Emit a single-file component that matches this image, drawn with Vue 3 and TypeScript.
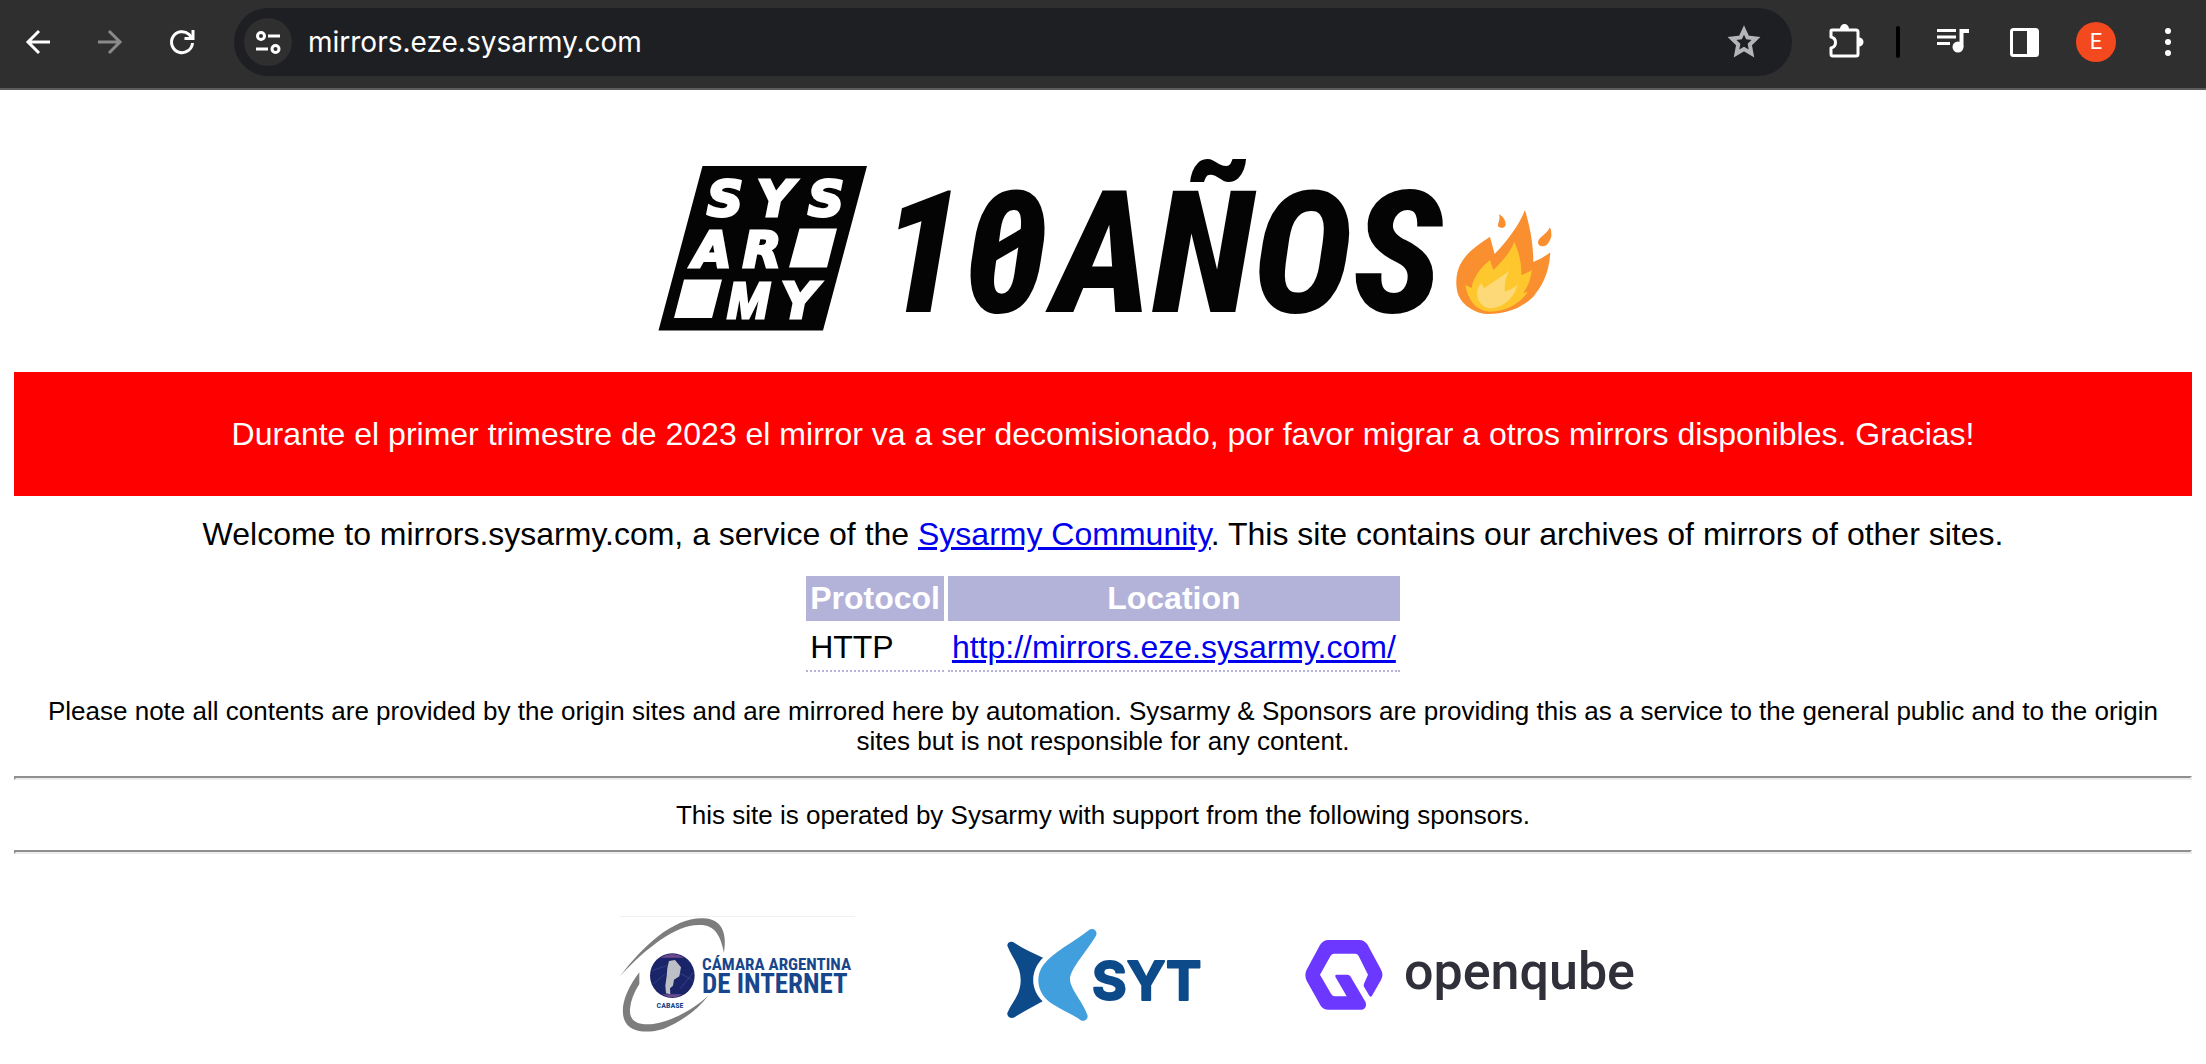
<script setup lang="ts">
import { ref } from 'vue'

interface MirrorLocation {
  protocol: string
  url: string
}

const address = ref<string>('mirrors.eze.sysarmy.com')
const locations: MirrorLocation[] = [
  { protocol: 'HTTP', url: 'http://mirrors.eze.sysarmy.com/' },
]
</script>

<template>
  <div class="window">
    <header class="toolbar">
      <nav class="nav-buttons">
        <button type="button" class="tool" aria-label="Back">
          <svg viewBox="0 0 48 48" fill="none" stroke="#fff" stroke-width="3">
            <path d="M36 24H14M25 13L14 24L25 35" />
          </svg>
        </button>
        <button type="button" class="tool" aria-label="Forward">
          <svg viewBox="0 0 48 48" fill="none" stroke="#8a8a8a" stroke-width="3">
            <path d="M12 24H34M23 13L34 24L23 35" />
          </svg>
        </button>
        <button type="button" class="tool" aria-label="Reload">
          <svg viewBox="0 0 48 48" fill="none" stroke="#fff" stroke-width="3">
            <path d="M34.500 25A10.500 10.500 0 1 1 31 16.300L34 20" />
            <path d="M35 12V20.500H26.500" />
          </svg>
        </button>
      </nav>

      <div class="omnibox">
        <button type="button" class="site-info" aria-label="Site information">
          <svg viewBox="0 0 48 48" fill="none" stroke="#fff" stroke-width="3">
            <circle cx="17" cy="18" r="3.500" />
            <path d="M24 18H36M12 31H24" />
            <circle cx="31.500" cy="31" r="3.500" />
          </svg>
        </button>
        <input v-model="address" class="address" type="text" aria-label="Address" spellcheck="false" />
        <button type="button" class="tool" aria-label="Bookmark this page">
          <svg viewBox="0 0 48 48" fill="none" stroke="#b4b5b8" stroke-width="4">
            <path d="M24 12L27.500 19.500L36 20.500L29.800 26.500L31.500 35.500L24 31L16.500 35.500L18.200 26.500L12 20.500L20.500 19.500Z" />
          </svg>
        </button>
      </div>

      <div class="actions">
        <button type="button" class="tool" aria-label="Extensions">
          <svg viewBox="0 0 48 48">
            <path
              d="M10 12H34Q36 12 36 14V36Q36 38 34 38H11Q9 38 9 36V30Q13.500 29 13.500 24.500T9 19V13Q9 12 10 12Z"
              fill="none"
              stroke="#fff"
              stroke-width="3"
              stroke-linejoin="round"
            />
            <path d="M18 11A4.500 5 0 0 1 27 11ZM37 19.500A4.500 4.500 0 0 1 37 28.500Z" fill="#fff" />
          </svg>
        </button>
        <span class="separator"></span>
        <button type="button" class="tool" aria-label="Media controls">
          <svg viewBox="0 0 48 48" fill="#fff">
            <path d="M9 11H28V14H9ZM9 17.500H28V20.500H9ZM9 24H22V27H9Z" />
            <circle cx="30" cy="29" r="5.500" />
            <path d="M31.500 11H41V15H35.500V29H31.500Z" />
          </svg>
        </button>
        <button type="button" class="tool" aria-label="Side panel">
          <svg viewBox="0 0 48 48">
            <rect x="11.500" y="11.500" width="26" height="26" rx="2" fill="none" stroke="#fff" stroke-width="3" />
            <path d="M27 11H38V38H27Z" fill="#fff" />
          </svg>
        </button>
        <button type="button" class="tool" aria-label="Profile">
          <span class="avatar">E</span>
        </button>
        <button type="button" class="tool" aria-label="Menu">
          <svg viewBox="0 0 48 48" fill="#fff">
            <circle cx="24" cy="13" r="3" />
            <circle cx="24" cy="24" r="3" />
            <circle cx="24" cy="35" r="3" />
          </svg>
        </button>
      </div>
    </header>

    <main class="page">
      <h1 class="banner">
        <svg class="banner-art" viewBox="643 90 920 282" role="img" aria-label="Sysarmy 10 años">
          <path d="M702.500 166H867L823 330.500H658.500Z" fill="#040404" />
          <g class="mark-letters">
            <text x="725" y="216">S</text>
            <text x="775" y="216">Y</text>
            <text x="826" y="216">S</text>
            <text x="712" y="267">A</text>
            <text x="762" y="267">R</text>
            <text x="748" y="318" class="wide-letter">M</text>
            <text x="799" y="318">Y</text>
          </g>
          <path d="M799.500 228.500H837L827 267.500H789ZM684 279.500H722L712 318H674Z" fill="#fff" />
          <g class="title">
            <text x="880" y="312">10</text>
            <text x="1053" y="312">AÑOS</text>
          </g>
          <path d="M978 254L1026 226V243L978 271Z" fill="#040404" />
          <g transform="translate(1200 140) scale(0.3333)">
            <path
              d="M975 210C990 260 1000 310 1000 366C1018 358 1035 350 1051 337C1048 400 1025 440 1000 470C965 505 920 522 865 522C830 522 790 500 775 465C765 435 768 400 780 375C800 335 840 310 870 290L884 342C920 305 955 260 975 210Z"
              fill="#f98f2f"
            />
            <path
              d="M897 223C912 230 918 245 917 255C914 266 898 266 894 257C893 248 902 240 897 223ZM1050 262C1058 280 1055 300 1040 315C1028 323 1014 318 1014 307C1016 290 1040 285 1050 262Z"
              fill="#f98f2f"
            />
            <path
              d="M943 306C958 340 965 370 964 405C975 402 985 397 996 390C992 415 985 440 970 458L983 457C960 490 920 515 870 515C830 512 805 485 796 435L815 444C820 410 845 380 870 360L880 390C905 365 930 340 943 306Z"
              fill="#fec72e"
            />
            <path
              d="M928 392C915 415 913 435 915 455C928 450 940 445 952 436C945 465 920 500 875 505C845 505 830 480 831 455C832 445 838 435 845 430L852 445C880 425 905 410 928 392Z"
              fill="#fdd977"
            />
          </g>
        </svg>
      </h1>

      <p class="notice">
        Durante el primer trimestre de 2023 el mirror va a ser decomisionado, por favor migrar a otros mirrors
        disponibles. Gracias!
      </p>

      <p class="welcome">
        Welcome to mirrors.sysarmy.com, a service of the <a href="#">Sysarmy Community</a>. This site contains our
        archives of mirrors of other sites.
      </p>

      <table class="locations">
        <thead>
          <tr>
            <th scope="col">Protocol</th>
            <th scope="col">Location</th>
          </tr>
        </thead>
        <tbody>
          <tr v-for="row in locations" :key="row.url">
            <td>{{ row.protocol }}</td>
            <td><a :href="row.url">{{ row.url }}</a></td>
          </tr>
        </tbody>
      </table>

      <p class="small">
        Please note all contents are provided by the origin sites and are mirrored here by automation. Sysarmy &amp;
        Sponsors are providing this as a service to the general public and to the origin sites but is not responsible
        for any content.
      </p>
      <hr />
      <p class="small">This site is operated by Sysarmy with support from the following sponsors.</p>
      <hr />

      <section class="sponsors" aria-label="Sponsors">
        <svg width="334" height="150" viewBox="566 890 334 150" role="img" aria-label="Cámara Argentina de Internet">
          <path d="M620 917.500H855" stroke="#f1f1f1" stroke-width="1" />
          <g transform="translate(600 890) scale(0.3333)">
            <path
              d="M60 262C130 170 220 85 310 88C365 90 382 130 372 192C362 140 345 108 300 108C230 105 140 175 60 262Z"
              fill="#7d7d7d"
            />
            <path
              d="M118 250C80 300 60 350 72 390C85 430 140 435 190 420C240 400 290 365 325 320C280 360 220 395 160 405C110 410 88 395 90 360C92 335 102 310 118 285Z"
              fill="#7d7d7d"
            />
            <circle cx="217" cy="260" r="67" fill="#1a2468" />
            <path d="M180 206Q217 184 254 206ZM186 316Q217 334 248 316Z" fill="#6c4a8c" />
            <path d="M155 245L200 230L280 275M240 300L280 250M160 285L195 255" stroke="#3c4a94" stroke-width="2" fill="none" />
            <path
              d="M207 216L225 213L243 235L238 262L222 272L219 290L210 298L211 316L198 313L196 290L200 262L202 238Z"
              fill="#bcc0c6"
            />
          </g>
          <text class="camara-top" x="702" y="971">CÁMARA ARGENTINA</text>
          <text class="camara-bottom" x="702" y="994">DE INTERNET</text>
          <text class="cabase" x="670" y="1009">CABASE</text>
        </svg>

        <svg width="240" height="150" viewBox="980 890 240 150" role="img" aria-label="SYT">
          <g transform="translate(980 900) scale(0.3333)">
            <path
              d="M82 140C82 128 95 125 104 132C130 150 160 162 189 176C150 215 150 270 188 307C160 322 130 338 105 354C92 362 80 352 82 342C95 310 122 290 122 243C122 200 95 175 82 140Z"
              fill="#0d4a8a"
            />
            <path
              d="M326 94C338 84 355 96 348 110C325 150 270 210 270 240C270 270 310 310 323 350C324 364 310 370 300 362C270 340 210 320 190 290C170 262 170 225 190 198C220 160 280 130 326 94Z"
              fill="#419fde"
            />
          </g>
          <text class="syt" x="1092" y="1001">SYT</text>
        </svg>

        <svg width="340" height="150" viewBox="1300 890 340 150" role="img" aria-label="openqube">
          <g transform="translate(1280 910) scale(0.3333)">
            <path
              d="M145 93H238Q252 93 262 106L302 180Q312 197 303 213L276 260Q272 266 268 260L252 233Q250 228 252 224L264 197L236 141Q232 134 226 134H162Q156 134 152 140L120 197L154 256Q158 262 164 262H200L166 203Q164 197 170 197H203Q208 197 211 202L257 280Q262 300 245 302H145Q130 302 122 290L80 215Q72 197 80 182L120 108Q130 93 145 93Z"
              fill="#6c38ff"
            />
          </g>
          <text class="openqube" x="1404" y="990">openqube</text>
        </svg>
      </section>
    </main>
  </div>
</template>

<style>
body {
  background: #fff;
}
</style>

<style scoped>
.window {
  font-family: "Liberation Sans", Arial, sans-serif;
  color: #000;
}

.toolbar {
  display: flex;
  align-items: center;
  box-sizing: border-box;
  height: 90px;
  padding: 8px 14px 12px;
  background: #2f2f2f;
  border-bottom: 2px solid #5c5c5c;
}

.nav-buttons,
.actions {
  display: flex;
  align-items: center;
  gap: 24px;
}

button {
  flex: none;
  width: 48px;
  height: 48px;
  padding: 0;
  border: 0;
  background: none;
  cursor: pointer;
}

button svg {
  display: block;
  width: 48px;
  height: 48px;
}

.omnibox {
  flex: 1;
  display: flex;
  align-items: center;
  box-sizing: border-box;
  height: 68px;
  margin: 0 30px 0 28px;
  padding: 0 24px 0 10px;
  border-radius: 34px;
  background: #1e1f23;
}

.site-info {
  border-radius: 50%;
  background: #2f2f2f;
}

.address {
  flex: 1;
  min-width: 0;
  height: 48px;
  margin-left: 16px;
  padding: 0;
  border: 0;
  outline: 0;
  background: none;
  color: #fff;
  font-family: Inter, Roboto, sans-serif;
  font-size: 28px;
}

.separator {
  width: 4px;
  height: 32px;
  margin: 0 4px 0 2px;
  border-radius: 2px;
  background: #000;
}

.avatar {
  display: block;
  width: 40px;
  height: 40px;
  margin: 0 auto;
  border-radius: 50%;
  background: #f4481e;
  color: #fff;
  font-family: Roboto, sans-serif;
  font-size: 22px;
  line-height: 40px;
  text-align: center;
}

.page {
  padding: 0 14px;
}

.banner {
  margin: 0;
}

.banner-art {
  display: block;
  width: 920px;
  max-width: 100%;
  margin: 0 auto;
}

.mark-letters {
  font: italic bold 50px "DejaVu Sans", sans-serif;
  fill: #fff;
  stroke: #fff;
  stroke-width: 3px;
  text-anchor: middle;
}

.wide-letter {
  font-family: "Liberation Sans", sans-serif;
}

.title {
  font: italic 800 170px "Roboto Condensed", Roboto, sans-serif;
  fill: #040404;
}

.notice {
  margin: 0;
  padding: 44px 14px;
  background: #f00;
  color: #fff;
  font-size: 32px;
  line-height: 36px;
  text-align: center;
}

.welcome {
  margin: 20px 0;
  font-size: 32px;
  line-height: 36px;
  text-align: center;
}

a {
  color: #00e;
}

.locations {
  margin: 0 auto;
  border-spacing: 4px;
  font-size: 32px;
  line-height: 37px;
}

.locations th {
  padding: 4px;
  background: #b3b3d9;
  color: #fff;
}

.locations td {
  padding: 4px;
  border-bottom: 2px dotted #b3b3d9;
}

.small {
  margin: 20px 0;
  padding: 0 14px;
  font-size: 26px;
  line-height: 30px;
  text-align: center;
}

hr {
  margin: 0;
  border: 2px solid;
  border-color: #8f8f8f #ededed #ededed #8f8f8f;
}

.sponsors {
  display: flex;
  justify-content: center;
  gap: 80px;
  margin-top: 35px;
}

.sponsors svg {
  display: block;
}

.camara-top,
.camara-bottom,
.cabase {
  font-family: "Roboto Condensed", Roboto, sans-serif;
  font-weight: bold;
  fill: #17468c;
}

.camara-top {
  font-size: 17px;
}

.camara-bottom {
  font-size: 27px;
}

.cabase {
  font-size: 8px;
  text-anchor: middle;
}

.syt {
  font: bold 53px Inter, sans-serif;
  fill: #0d4a8a;
  stroke: #0d4a8a;
  stroke-width: 2px;
  stroke-linejoin: round;
}

.openqube {
  font: 500 52px Roboto, sans-serif;
  fill: #2f303a;
}
</style>
